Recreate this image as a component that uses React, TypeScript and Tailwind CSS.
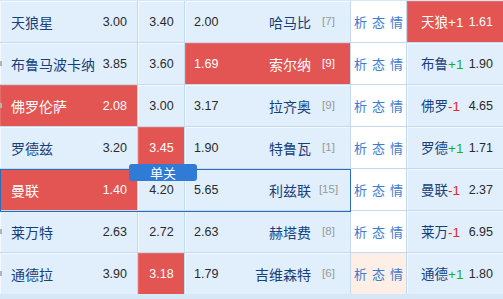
import React from "react";

type Row = {
  home: string;
  hOdd: string;
  draw: string;
  aOdd: string;
  away: string;
  rank: string;
  red: "home" | "draw" | "away" | null;
  hcName: string;
  hcSign: string;
  hcOdd: string;
  hcRed?: boolean;
  tick?: boolean;
  selected?: boolean;
  peach?: boolean;
};

const rows: Row[] = [
  { home: "天狼星", hOdd: "3.00", draw: "3.40", aOdd: "2.00", away: "哈马比", rank: "[7]", red: null, hcName: "天狼", hcSign: "+1", hcOdd: "1.61", hcRed: true },
  { home: "布鲁马波卡纳", hOdd: "3.85", draw: "3.60", aOdd: "1.69", away: "索尔纳", rank: "[9]", red: "away", hcName: "布鲁", hcSign: "+1", hcOdd: "1.90", tick: true },
  { home: "佛罗伦萨", hOdd: "2.08", draw: "3.00", aOdd: "3.17", away: "拉齐奥", rank: "[9]", red: "home", hcName: "佛罗", hcSign: "-1", hcOdd: "4.65", tick: true },
  { home: "罗德兹", hOdd: "3.20", draw: "3.45", aOdd: "1.90", away: "特鲁瓦", rank: "[1]", red: "draw", hcName: "罗德", hcSign: "+1", hcOdd: "1.71" },
  { home: "曼联", hOdd: "1.40", draw: "4.20", aOdd: "5.65", away: "利兹联", rank: "[15]", red: "home", hcName: "曼联", hcSign: "-1", hcOdd: "2.37", selected: true },
  { home: "莱万特", hOdd: "2.63", draw: "2.72", aOdd: "2.63", away: "赫塔费", rank: "[8]", red: null, hcName: "莱万", hcSign: "-1", hcOdd: "6.95", tick: true },
  { home: "通德拉", hOdd: "3.90", draw: "3.18", aOdd: "1.79", away: "吉维森特", rank: "[6]", red: "draw", hcName: "通德", hcSign: "+1", hcOdd: "1.80", tick: true, peach: true },
];

const NUM = "font-['Liberation_Sans',Arial,sans-serif] text-[12.5px]";
const blueCell = "bg-[#e1effc] border-t border-l border-[#f4f9ff]";
const redCell = "bg-[#e25553] border-t border-l border-[#e86b69]";

export default function App() {
  return (
    <div className="w-[503px] h-[299px] overflow-hidden bg-[#d6e7f8] pt-[1px] font-['Noto_Sans_CJK_SC','Noto_Sans',sans-serif]">
      <div className="flex flex-col gap-[1px] bg-[#c4d9ee]">
        {rows.map((r, i) => (
          <div key={i} className="relative flex h-[41px] gap-[1px]">
            {r.tick && (
              <div className="absolute left-0 top-[18px] w-[2px] h-[5px] bg-[#b4b4b4] z-10" />
            )}
            {/* home */}
            <div
              className={`w-[137px] flex items-center justify-between px-[10px] ${
                r.red === "home" ? redCell : blueCell
              }`}
            >
              <span className={`text-[14px] ${r.red === "home" ? "text-white" : "text-[#173f7c]"}`}>
                {r.home}
              </span>
              <span className={`${NUM} ${r.red === "home" ? "text-white" : "text-[#2a2a2a]"}`}>
                {r.hOdd}
              </span>
            </div>
            {/* draw */}
            <div
              className={`w-[46px] flex items-center justify-center ${
                r.red === "draw" ? redCell : blueCell
              }`}
            >
              <span className={`${NUM} ${r.red === "draw" ? "text-white" : "text-[#2a2a2a]"}`}>
                {r.draw}
              </span>
            </div>
            {/* away */}
            <div
              className={`w-[165px] flex items-center pl-[8px] pr-[4px] ${
                r.red === "away" ? redCell : blueCell
              }`}
            >
              <span className={`${NUM} ${r.red === "away" ? "text-white" : "text-[#2a2a2a]"}`}>
                {r.aOdd}
              </span>
              <span
                className={`flex-1 text-right text-[14px] ${
                  r.red === "away" ? "text-white" : "text-[#173f7c]"
                }`}
              >
                {r.away}
              </span>
              <span
                className={`w-[35px] text-center text-[11.5px] font-['Liberation_Sans',Arial,sans-serif] ${
                  r.red === "away" ? "text-white" : "text-[#9a9a9a]"
                }`}
              >
                {r.rank}
              </span>
            </div>
            {/* tools */}
            <div
              className={`w-[55px] flex items-center justify-center gap-[5px] text-[13px] text-[#3c7bd2] ${
                r.peach ? "bg-[#fdefe6]" : "bg-white"
              }`}
            >
              <span>析</span>
              <span>态</span>
              <span>情</span>
            </div>
            {/* handicap */}
            <div
              className={`w-[96px] flex items-center justify-between pl-[13px] pr-[10px] ${
                r.hcRed ? redCell : blueCell
              }`}
            >
              <span className="text-[13.5px]">
                <span className={r.hcRed ? "text-white" : "text-[#173f7c]"}>{r.hcName}</span>
                <span
                  className={`font-['Liberation_Sans',Arial,sans-serif] ${
                    r.hcRed
                      ? "text-white"
                      : r.hcSign === "+1"
                      ? "text-[#1fae1f]"
                      : "text-[#e5262b]"
                  }`}
                >
                  {r.hcSign}
                </span>
              </span>
              <span className={`${NUM} ${r.hcRed ? "text-white" : "text-[#2a2a2a]"}`}>
                {r.hcOdd}
              </span>
            </div>
            {r.selected && (
              <>
                <div className="pointer-events-none absolute left-0 top-0 w-[351px] h-[43px] border border-[#2c6db5] z-10" />
                <div className="absolute left-[129px] top-[-5px] w-[68px] h-[17px] rounded-[3px] bg-[#2f7bd6] text-white text-[13px] leading-[17px] text-center z-20">
                  单关
                </div>
              </>
            )}
          </div>
        ))}
      </div>
    </div>
  );
}
